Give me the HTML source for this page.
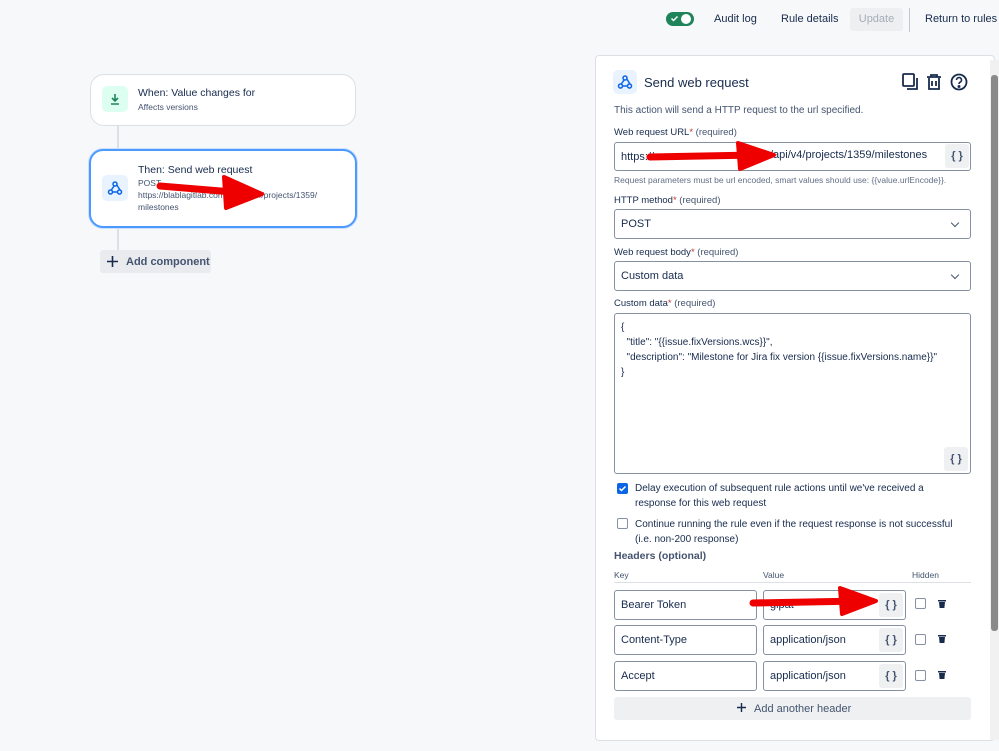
<!DOCTYPE html>
<html><head><meta charset="utf-8"><style>
*{box-sizing:border-box;margin:0;padding:0}
body{width:999px;height:751px;background:#f7f8f9;font-family:"Liberation Sans",sans-serif;color:#172b4d;position:relative;overflow:hidden;font-size:11px}
.a{position:absolute;white-space:nowrap}
.card{position:absolute;background:#fff;border:1px solid #dcdfe4;border-radius:14px}
.inp{position:absolute;background:#fff;border:1px solid #8590a2;border-radius:3px;font-size:11px;color:#172b4d;padding-left:6px;display:flex;align-items:center}
.br{position:absolute;width:24px;height:24px;background:#eef0f2;border-radius:3px;font-weight:bold;font-size:11px;display:flex;align-items:center;justify-content:center;color:#44546f}
.lbl{position:absolute;font-size:9.5px;color:#44546f;white-space:nowrap}
.lbl i{font-style:normal;color:#c9372c}
.cb{position:absolute;width:11px;height:11px;border:1px solid #8590a2;border-radius:2px;background:#fff}
.chev{position:absolute;right:12px;top:10px;width:6px;height:6px;border-right:1.5px solid #44546f;border-bottom:1.5px solid #44546f;transform:rotate(45deg)}
</style></head><body>
<!-- top bar -->
<div class="a" style="left:666px;top:12px;width:28px;height:14px;border-radius:7px;background:#1f845a"></div>
<div class="a" style="left:681px;top:14px;width:10px;height:10px;border-radius:5px;background:#fff"></div>
<svg class="a" style="left:670px;top:14px" width="9" height="9" viewBox="0 0 9 9"><path d="M1.5 4.5l2 2 4-4" stroke="#fff" stroke-width="1.5" fill="none"/></svg>
<div class="a" style="left:714px;top:13px;font-size:11px">Audit log</div>
<div class="a" style="left:781px;top:13px;font-size:11px">Rule details</div>
<div class="a" style="left:850px;top:8px;width:53px;height:23px;background:#eeeff1;border-radius:3px;color:#a5adba;font-size:11px;text-align:center;line-height:23px">Update</div>
<div class="a" style="left:909px;top:8px;width:1px;height:24px;background:#c1c7d0"></div>
<div class="a" style="left:925px;top:13px;font-size:11px">Return to rules</div>

<!-- left flow -->
<div class="a" style="left:117px;top:125px;width:2px;height:125px;background:#dcdfe4"></div>
<div class="card" style="left:90px;top:74px;width:266px;height:52px"></div>
<div class="a" style="left:102px;top:86px;width:26px;height:26px;background:#dcfff1;border-radius:5px"></div>
<svg class="a" style="left:108px;top:92px" width="14" height="14" viewBox="0 0 14 14"><path d="M7 2v7M4 6l3 3 3-3M3 12h8" stroke="#1f845a" stroke-width="1.6" fill="none"/></svg>
<div class="a" style="left:138px;top:87px;font-size:10.5px">When: Value changes for</div>
<div class="a" style="left:138px;top:102px;font-size:8.5px;color:#44546f">Affects versions</div>

<div class="card" style="left:89px;top:149px;width:268px;height:79px;border:2px solid #4c9aff;box-shadow:0 0 0 1px #cce0ff"></div>
<div class="a" style="left:102px;top:175px;width:26px;height:26px;background:#e9f2ff;border-radius:5px"></div>
<svg class="a" style="left:107px;top:180px" width="16" height="16" viewBox="0 0 16 16" fill="none" stroke="#0c66e4" stroke-width="1.5"><circle cx="8" cy="4" r="2"/><circle cx="3.5" cy="12" r="2"/><circle cx="12.5" cy="12" r="2"/><path d="M7 6L4 10.5M9.5 4.5L13 10M5.5 12h5"/></svg>
<div class="a" style="left:138px;top:164px;font-size:10.5px">Then: Send web request</div>
<div class="a" style="left:138px;top:178px;font-size:8.5px;color:#44546f">POST</div>
<div class="a" style="left:138px;top:190px;font-size:8.5px;color:#44546f">https://blablagitlab.com.cn/api/v4/projects/1359/</div>
<div class="a" style="left:138px;top:202px;font-size:8.5px;color:#44546f">milestones</div>
<div class="a" style="left:100px;top:250px;width:111px;height:23px;background:#e9ebee;border-radius:3px"></div>
<svg class="a" style="left:106px;top:255px" width="13" height="13" viewBox="0 0 13 13"><path d="M6.5 1v11M1 6.5h11" stroke="#172b4d" stroke-width="1.6"/></svg>
<div class="a" style="left:126px;top:256px;font-size:11px;font-weight:bold;color:#44546f">Add component</div>

<!-- panel -->
<div class="a" style="left:595px;top:55px;width:400px;height:686px;background:#fff;border:1px solid #dcdfe4;border-radius:4px"></div>
<div class="a" style="left:990px;top:60px;width:9px;height:680px;background:#f1f1f1"></div>
<div class="a" style="left:991px;top:75px;width:7px;height:556px;background:#8a8a8a;border-radius:3px"></div>
<div class="a" style="left:613px;top:70px;width:24px;height:24px;background:#e9f2ff;border-radius:5px"></div>
<svg class="a" style="left:617px;top:74px" width="16" height="16" viewBox="0 0 16 16" fill="none" stroke="#0c66e4" stroke-width="1.5"><circle cx="8" cy="4" r="2"/><circle cx="3.5" cy="12" r="2"/><circle cx="12.5" cy="12" r="2"/><path d="M7 6L4 10.5M9.5 4.5L13 10M5.5 12h5"/></svg>
<div class="a" style="left:644px;top:75px;font-size:13px">Send web request</div>
<svg class="a" style="left:902px;top:73px" width="68" height="18" viewBox="0 0 68 18" fill="none" stroke="#172b4d" stroke-width="1.8"><rect x="1" y="1" width="11" height="12" rx="1"/><path d="M5 16h10V5"/><path d="M25 4h14M29 4V2h6v2M27 5v11h10V5M30 8v5M34 8v5"/><circle cx="57" cy="9" r="7.5"/><path d="M54.5 7a2.5 2.5 0 1 1 3.5 2.3c-.8.4-1 1-1 1.7" stroke-width="1.6"/><circle cx="57" cy="13.5" r=".6" fill="#172b4d"/></svg>
<div class="a" style="left:614px;top:105px;font-size:10px;color:#44546f">This action will send a HTTP request to the url specified.</div>

<div class="lbl" style="left:614px;top:127px"><span style="color:#172b4d">Web request URL</span><i>*</i> (required)</div>
<div class="inp" style="left:614px;top:142px;width:357px;height:29px">https://</div>
<div class="a" style="left:770px;top:149px;font-size:11px">/api/v4/projects/1359/milestones</div>
<div class="br" style="left:945px;top:144px">{ }</div>
<div class="a" style="left:614px;top:175px;font-size:8.5px;color:#626f86">Request parameters must be url encoded, smart values should use: {{value.urlEncode}}.</div>

<div class="lbl" style="left:614px;top:195px"><span style="color:#172b4d">HTTP method</span><i>*</i> (required)</div>
<div class="inp" style="left:614px;top:209px;width:357px;height:30px">POST<div class="chev"></div></div>
<div class="lbl" style="left:614px;top:247px"><span style="color:#172b4d">Web request body</span><i>*</i> (required)</div>
<div class="inp" style="left:614px;top:261px;width:357px;height:30px">Custom data<div class="chev"></div></div>
<div class="lbl" style="left:614px;top:298px"><span style="color:#172b4d">Custom data</span><i>*</i> (required)</div>
<div class="inp" style="left:614px;top:313px;width:357px;height:161px;display:block;padding:6px 6px;font-size:10px;line-height:15px;white-space:pre">{
  "title": "{{issue.fixVersions.wcs}}",
  "description": "Milestone for Jira fix version {{issue.fixVersions.name}}"
}</div>
<div class="br" style="left:944px;top:447px">{ }</div>

<div class="cb" style="left:617px;top:483px;background:#0c66e4;border-color:#0c66e4"></div>
<svg class="a" style="left:618px;top:484px" width="9" height="9" viewBox="0 0 9 9"><path d="M1.5 4.5l2 2 4-4" stroke="#fff" stroke-width="1.5" fill="none"/></svg>
<div class="a" style="left:635px;top:481px;font-size:10px;line-height:15px;white-space:normal;width:330px">Delay execution of subsequent rule actions until we've received a response for this web request</div>
<div class="cb" style="left:617px;top:518px"></div>
<div class="a" style="left:635px;top:517px;font-size:10px;line-height:15px;white-space:normal;width:332px">Continue running the rule even if the request response is not successful (i.e. non-200 response)</div>
<div class="a" style="left:614px;top:550px;font-size:10.5px;font-weight:bold;color:#44546f">Headers (optional)</div>
<div class="a" style="left:614px;top:570px;font-size:8.5px;color:#44546f">Key</div>
<div class="a" style="left:763px;top:570px;font-size:8.5px;color:#44546f">Value</div>
<div class="a" style="left:912px;top:570px;font-size:8.5px;color:#44546f">Hidden</div>
<div class="a" style="left:614px;top:582px;width:357px;height:1px;background:#dcdfe4"></div>

<div class="inp" style="left:614px;top:590px;width:143px;height:30px">Bearer Token</div>
<div class="inp" style="left:763px;top:590px;width:143px;height:30px">glpat-</div><div class="br" style="left:879px;top:593px">{ }</div>
<div class="cb" style="left:915px;top:598px"></div>
<div class="inp" style="left:614px;top:625px;width:143px;height:30px">Content-Type</div>
<div class="inp" style="left:763px;top:625px;width:143px;height:30px">application/json</div><div class="br" style="left:879px;top:628px">{ }</div>
<div class="cb" style="left:915px;top:634px"></div>
<div class="inp" style="left:614px;top:661px;width:143px;height:30px">Accept</div>
<div class="inp" style="left:763px;top:661px;width:143px;height:30px">application/json</div><div class="br" style="left:879px;top:664px">{ }</div>
<div class="cb" style="left:915px;top:670px"></div>
<svg class="a" style="left:937px;top:599px" width="10" height="85" viewBox="0 0 10 85" fill="#172b4d"><path d="M1 1h8v1.5H1zM2 3h6l-.6 6H2.6zM1 36h8v1.5H1zM2 38h6l-.6 6H2.6zM1 72h8v1.5H1zM2 74h6l-.6 6H2.6z"/></svg>
<div class="a" style="left:614px;top:697px;width:357px;height:23px;background:#eef0f2;border-radius:3px"></div>
<svg class="a" style="left:736px;top:702px" width="11" height="11" viewBox="0 0 11 11"><path d="M5.5 1v9M1 5.5h9" stroke="#172b4d" stroke-width="1.4"/></svg>
<div class="a" style="left:754px;top:703px;font-size:11px;color:#44546f">Add another header</div>

<!-- red arrows -->
<svg class="a" style="left:0;top:0" width="999" height="751" viewBox="0 0 999 751">
<g fill="#e00" stroke="#e00" stroke-linejoin="round" stroke-linecap="round">
<path d="M160 186 L245 193" stroke-width="7" fill="none"/><path d="M224 177 L262 194 L226 208 Z" stroke-width="4"/>
<path d="M650 157 L755 155" stroke-width="7" fill="none"/><path d="M738 143 L774 155 L740 169 Z" stroke-width="4"/>
<path d="M753 603 L860 601" stroke-width="7" fill="none"/><path d="M840 588 L876 601 L842 614 Z" stroke-width="4"/>
</g></svg>
</body></html>
